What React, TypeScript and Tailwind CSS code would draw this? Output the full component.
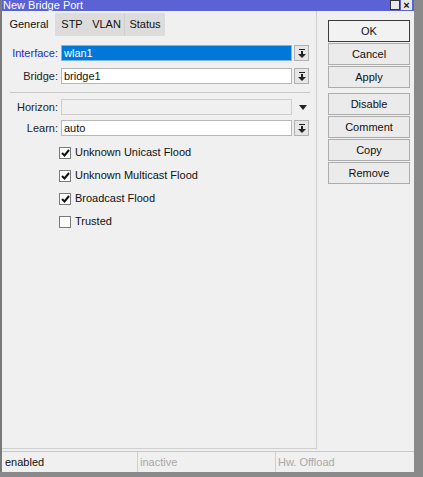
import * as React from 'react';

// dropdown arrow (bar + down arrow) like WinBox
function DropIcon() {
  return (
    <svg width="8" height="9" viewBox="0 0 8 9">
      <rect x="1" y="0" width="6" height="1" fill="#222" />
      <rect x="3" y="2" width="2" height="3" fill="#222" />
      <polygon points="0,5 8,5 4,9" fill="#222" />
    </svg>
  );
}

function CheckRow({ label, checked }: { label: string; checked: boolean }) {
  return (
    <div className="flex h-[23px] items-center">
      <div className="flex h-[12px] w-[12px] items-center justify-center border border-[#7a7a7a] bg-white">
        {checked && (
          <svg width="9" height="8" viewBox="0 0 9 8">
            <polyline points="1,4 3.5,6.5 8,1" fill="none" stroke="#111" strokeWidth="2" />
          </svg>
        )}
      </div>
      <span className="ml-[4px] text-[11px] text-[#111]">{label}</span>
    </div>
  );
}

function Field({
  label,
  value,
  blueLabel,
  selected,
  disabled,
}: {
  label: string;
  value?: string;
  blueLabel?: boolean;
  selected?: boolean;
  disabled?: boolean;
}) {
  return (
    <div className="flex h-[16px] items-center">
      <div className={`w-[57px] pr-[1px] text-right text-[11px] ${blueLabel ? 'text-[#1a2bc8]' : 'text-[#222]'}`}>
        {label}:
      </div>
      <div
        className={`ml-[2px] flex h-[16px] w-[231px] items-center border px-[2px] text-[11px] ${
          selected
            ? 'border-[#7eb4ea] bg-[#0078d7] text-white'
            : disabled
              ? 'border-[#cfcfcf] bg-[#f0f0f0]'
              : 'border-[#b7b7b7] bg-white text-[#111]'
        }`}
      >
        {value}
      </div>
      {disabled ? (
        <div className="ml-[4px] flex h-[16px] w-[14px] items-center justify-center">
          <svg width="8" height="5" viewBox="0 0 8 5">
            <polygon points="0,0 8,0 4,5" fill="#222" />
          </svg>
        </div>
      ) : (
        <div className="ml-[2px] flex h-[16px] w-[15px] items-center justify-center border border-[#b0b0b0] bg-[#e6e6e6]">
          <DropIcon />
        </div>
      )}
    </div>
  );
}

function Btn({ children, primary }: { children: React.ReactNode; primary?: boolean }) {
  return (
    <div
      className={`flex h-[22px] w-[82px] items-center justify-center border text-[11px] text-[#111] ${
        primary ? 'border-[#3c3c3c] bg-[#f2f2f2]' : 'border-[#adadad] bg-[#ebebeb]'
      }`}
    >
      {children}
    </div>
  );
}

export default function App() {
  return (
    <div
      className="flex h-[477px] w-[423px] bg-[#8a8a8a]"
      style={{ fontFamily: '"Liberation Sans", Arial, sans-serif' }}
    >
      <div className="flex h-[472px] w-[414px] flex-col border-l-2 border-[#7a7a7a] bg-[#f0f0f0]">
        {/* Titelbalken */}
        <div className="flex h-[11px] items-center justify-between bg-[#5b62d3]">
          <span className="ml-[1px] text-[11px] leading-[11px] text-white">New Bridge Port</span>
          <div className="mr-[2px] flex h-[11px] items-start gap-[1px]">
            <div className="h-[10px] w-[10px] border border-[#333] bg-[#e8e8e8]" />
            <div className="flex h-[10px] w-[11px] items-center justify-center bg-[#e8e8e8] text-[11px] leading-none font-bold text-[#111]">
              ×
            </div>
          </div>
        </div>

        <div className="flex flex-1">
          {/* linke Seite */}
          <div className="flex w-[315px] flex-col border-r border-b border-[#cfcfcf]">
            {/* Tabs */}
            <div className="mt-[2px] flex h-[23px] pl-[1px] text-[11px] text-[#111]">
              <div className="flex w-[52px] items-center justify-center bg-[#f0f0f0]">General</div>
              <div className="flex w-[34px] items-center justify-center bg-[#dcdcdc]">STP</div>
              <div className="flex w-[36px] items-center justify-center border-r border-[#cfcfcf] bg-[#dcdcdc]">VLAN</div>
              <div className="flex w-[40px] items-center justify-center bg-[#dcdcdc]">Status</div>
            </div>

            <div className="flex flex-col pt-[9px]">
              <Field label="Interface" value="wlan1" blueLabel selected />
              <div className="h-[7px]" />
              <Field label="Bridge" value="bridge1" />
              <div className="mx-[8px] mt-[8px] h-px w-[300px] bg-[#c8c8c8]" />
              <div className="h-[6px]" />
              <Field label="Horizon" disabled />
              <div className="h-[5px]" />
              <Field label="Learn" value="auto" />
              <div className="ml-[57px] mt-[5px] flex flex-col">
                <CheckRow label="Unknown Unicast Flood" checked />
                <CheckRow label="Unknown Multicast Flood" checked />
                <CheckRow label="Broadcast Flood" checked />
                <CheckRow label="Trusted" checked={false} />
              </div>
            </div>
          </div>

          {/* Buttons */}
          <div className="ml-[11px] flex flex-col pt-[9px]">
            <div className="flex flex-col gap-[1px]">
              <Btn primary>OK</Btn>
              <Btn>Cancel</Btn>
              <Btn>Apply</Btn>
            </div>
            <div className="mt-[5px] flex flex-col gap-[1px]">
              <Btn>Disable</Btn>
              <Btn>Comment</Btn>
              <Btn>Copy</Btn>
              <Btn>Remove</Btn>
            </div>
          </div>
        </div>

        {/* Statusleiste */}
        <div className="mt-[2px] flex h-[21px] border-t border-[#c8c8c8] text-[11px]">
          <div className="flex w-[136px] items-center border-r border-[#d0d0d0] pl-[3px] text-[#111]">enabled</div>
          <div className="flex w-[138px] items-center border-r border-[#d0d0d0] pl-[2px] text-[#a8a8a8]">inactive</div>
          <div className="flex flex-1 items-center pl-[2px] text-[#a8a8a8]">Hw. Offload</div>
        </div>
      </div>
    </div>
  );
}
